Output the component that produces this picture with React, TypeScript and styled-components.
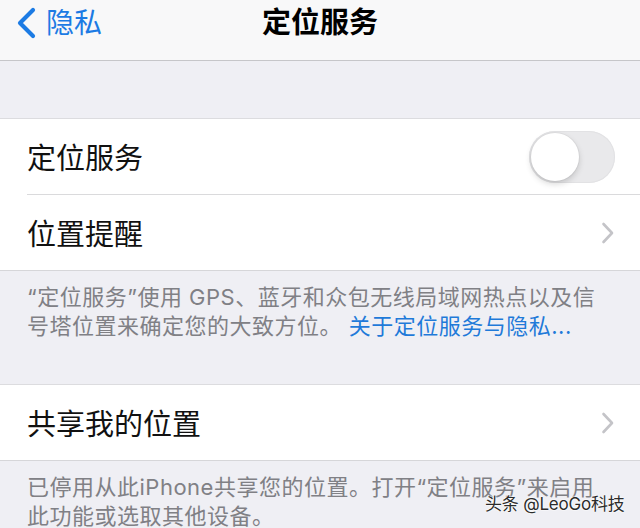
import React from "react";
import styled, { createGlobalStyle } from "styled-components";

const Global = createGlobalStyle`
  html, body { margin: 0; padding: 0; }
  body {
    background: #efeff4;
    font-family: "Inter", "Noto Sans CJK SC", sans-serif;
    -webkit-font-smoothing: antialiased;
  }
`;

const Page = styled.div`
  position: relative;
  width: 640px;
  height: 528px;
  overflow: hidden;
  background: #efeff4;
`;

const NavBar = styled.header`
  height: 59px;
  border-bottom: 1px solid #c6c6c9;
  background: #f8f8f9;
  display: grid;
  grid-template-columns: 1fr auto 1fr;
  align-items: center;
  padding-bottom: 1px;
  box-sizing: content-box;
`;

const BackButton = styled.div`
  display: flex;
  align-items: center;
  gap: 9px;
  padding-left: 15px;
  color: #1c7be4;
  font-size: 28px;
  line-height: 1;
  margin-top: -14px;
`;

const Title = styled.h1`
  margin: 0;
  margin-top: -14px;
  font-size: 29px;
  font-weight: 600;
  color: #000;
  line-height: 1;
`;

const Spacer = styled.div<{ $h: number }>`
  height: ${(p) => p.$h}px;
`;

const Section = styled.section`
  background: #fff;
  border-top: 1px solid #dcdcdf;
  border-bottom: 1px solid #d6d6d9;
`;

const Row = styled.div`
  padding-left: 27px;
`;

const RowInner = styled.div<{ $last?: boolean }>`
  height: 75px;
  display: flex;
  align-items: center;
  justify-content: space-between;
  padding-right: 26px;
  border-bottom: ${(p) => (p.$last ? "none" : "1px solid #dadadc")};
`;

const RowLabel = styled.span`
  font-size: 29px;
  color: #111;
  line-height: 1;
  padding-top: 3px;
`;

const Toggle = styled.div`
  position: relative;
  width: 86px;
  height: 52px;
  border-radius: 26px;
  background: #e9e9eb;
  box-shadow: inset 0 0 0 1px #e2e2e4;
  margin-right: -1px;
`;

const Knob = styled.div`
  position: absolute;
  top: 2px;
  left: 2px;
  width: 48px;
  height: 48px;
  border-radius: 50%;
  background: #fff;
  box-shadow: 0 3px 6px rgba(0, 0, 0, 0.16), 0 0 0 1px rgba(0, 0, 0, 0.04);
`;

const Footer = styled.p<{ $pb: number }>`
  margin: 0;
  padding: 12px 27px ${(p) => p.$pb}px;
  font-size: 22px;
  line-height: 29px;
  color: #808085;
  letter-spacing: 0.5px;
  white-space: nowrap;
`;

const Link = styled.span`
  color: #1f7ad9;
`;

const Watermark = styled.div`
  position: absolute;
  left: 485px;
  top: 494px;
  font-size: 17px;
  line-height: 20px;
  color: #2b2b2b;
  letter-spacing: -0.2px;
  text-shadow: 0 0 2px #fff, 0 0 2px #fff, 0 0 1px #fff;
`;

const Chevron = () => (
  <svg width="14" height="22" viewBox="0 0 14 22" style={{ marginRight: -1 }}>
    <path d="M2.5 2 L11 11 L2.5 20" fill="none" stroke="#c4c4c8" strokeWidth="2.6" strokeLinecap="round" strokeLinejoin="round" />
  </svg>
);

const BackChevron = () => (
  <svg width="22" height="32" viewBox="0 0 22 32">
    <path d="M18 3 L5 16 L18 29" fill="none" stroke="#1c7be4" strokeWidth="4.2" strokeLinecap="round" strokeLinejoin="round" />
  </svg>
);

export default function App() {
  return (
    <Page>
      <Global />
      <NavBar>
        <BackButton>
          <BackChevron />
          <span>隐私</span>
        </BackButton>
        <Title>定位服务</Title>
        <div />
      </NavBar>
      <Spacer $h={57} />
      <Section>
        <Row>
          <RowInner>
            <RowLabel>定位服务</RowLabel>
            <Toggle>
              <Knob />
            </Toggle>
          </RowInner>
        </Row>
        <Row>
          <RowInner $last>
            <RowLabel>位置提醒</RowLabel>
            <Chevron />
          </RowInner>
        </Row>
      </Section>
      <Footer $pb={43}>
        “定位服务”使用 GPS、蓝牙和众包无线局域网热点以及信
        <br />
        号塔位置来确定您的大致方位。 <Link>关于定位服务与隐私...</Link>
      </Footer>
      <Section>
        <Row>
          <RowInner $last>
            <RowLabel>共享我的位置</RowLabel>
            <Chevron />
          </RowInner>
        </Row>
      </Section>
      <Footer $pb={10}>
        已停用从此iPhone共享您的位置。打开“定位服务”来启用
        <br />
        此功能或选取其他设备。
      </Footer>
      <Watermark>头条 @LeoGo科技</Watermark>
    </Page>
  );
}
